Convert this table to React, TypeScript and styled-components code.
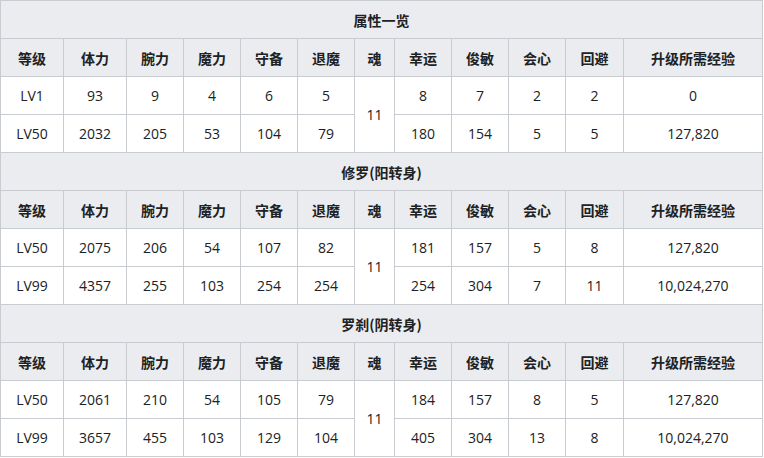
import React from "react";
import styled, { createGlobalStyle } from "styled-components";

const GlobalStyle = createGlobalStyle`
  body {
    margin: 0;
    background: #ffffff;
    font-family: "Open Sans", "Noto Sans CJK SC", sans-serif;
    color: #202122;
  }
`;

type Row = (string | number)[];

type Section = {
  title: string;
  soul: number;
  rows: Row[];
};

const headers = ["等级", "体力", "腕力", "魔力", "守备", "退魔", "魂", "幸运", "俊敏", "会心", "回避", "升级所需经验"];
const widths = [63, 63, 57, 57, 57, 57, 40, 57, 57, 57, 58, 139];

const sections: Section[] = [
  {
    title: "属性一览",
    soul: 11,
    rows: [
      ["LV1", 93, 9, 4, 6, 5, 8, 7, 2, 2, "0"],
      ["LV50", 2032, 205, 53, 104, 79, 180, 154, 5, 5, "127,820"],
    ],
  },
  {
    title: "修罗(阳转身)",
    soul: 11,
    rows: [
      ["LV50", 2075, 206, 54, 107, 82, 181, 157, 5, 8, "127,820"],
      ["LV99", 4357, 255, 103, 254, 254, 254, 304, 7, 11, "10,024,270"],
    ],
  },
  {
    title: "罗刹(阴转身)",
    soul: 11,
    rows: [
      ["LV50", 2061, 210, 54, 105, 79, 184, 157, 8, 5, "127,820"],
      ["LV99", 3657, 455, 103, 129, 104, 405, 304, 13, 8, "10,024,270"],
    ],
  },
];

const Table = styled.table`
  border-collapse: collapse;
  width: 763px;
  table-layout: fixed;
  font-size: 14px;
`;

const Cell = styled.td<{ $head?: boolean }>`
  border: 1px solid #c8ccd1;
  height: 37px;
  padding: 0;
  text-align: center;
  vertical-align: middle;
  background: ${(p) => (p.$head ? "#eaecf0" : "#ffffff")};
  font-weight: ${(p) => (p.$head ? 700 : 400)};
  font-family: ${(p) =>
    p.$head ? `"Noto Sans CJK SC", sans-serif` : `"Open Sans", "Noto Sans CJK SC", sans-serif`};
  color: #202122;
  line-height: 20px;
`;

const StatSection = ({ section }: { section: Section }) => (
  <>
    <tr>
      <Cell as="th" $head colSpan={12}>
        {section.title}
      </Cell>
    </tr>
    <tr>
      {headers.map((h) => (
        <Cell as="th" $head key={h}>
          {h}
        </Cell>
      ))}
    </tr>
    {section.rows.map((row, i) => (
      <tr key={i}>
        {row.slice(0, 6).map((v, j) => (
          <Cell key={j}>{v}</Cell>
        ))}
        {i === 0 && <Cell rowSpan={2}>{section.soul}</Cell>}
        {row.slice(6).map((v, j) => (
          <Cell key={j + 6}>{v}</Cell>
        ))}
      </tr>
    ))}
  </>
);

export default function App() {
  return (
    <>
      <GlobalStyle />
      <Table>
        <colgroup>
          {widths.map((w, i) => (
            <col key={i} style={{ width: w }} />
          ))}
        </colgroup>
        <tbody>
          {sections.map((s) => (
            <StatSection key={s.title} section={s} />
          ))}
        </tbody>
      </Table>
    </>
  );
}
